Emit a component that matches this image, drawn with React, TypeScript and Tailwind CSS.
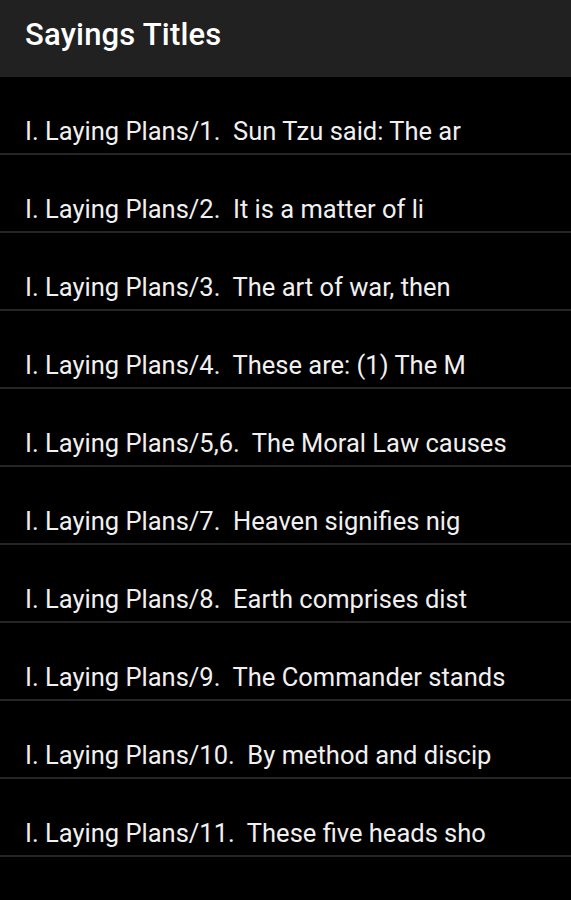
const titles = [
  'I. Laying Plans/1.  Sun Tzu said: The ar',
  'I. Laying Plans/2.  It is a matter of li',
  'I. Laying Plans/3.  The art of war, then',
  'I. Laying Plans/4.  These are: (1) The M',
  'I. Laying Plans/5,6.  The Moral Law causes',
  'I. Laying Plans/7.  Heaven signifies nig',
  'I. Laying Plans/8.  Earth comprises dist',
  'I. Laying Plans/9.  The Commander stands',
  'I. Laying Plans/10.  By method and discip',
  'I. Laying Plans/11.  These five heads sho',
  'I. Laying Plans/12.  Therefore, in your d',
];

export default function App() {
  return (
    <div className="h-[900px] overflow-hidden bg-black text-white font-['Roboto',sans-serif]">
      <header className="h-[77px] bg-[#212121] px-[25px] pt-[15px]">
        <h1 className="text-[31px] leading-[40px] font-medium text-white tracking-[0.2px]">Sayings Titles</h1>
      </header>

      <ul>
        {titles.map((t) => (
          <li key={t} className="h-[78px] border-b-2 border-[#262626] px-[25px] pt-[40px]">
            <span className="block text-[25.5px] leading-[28px] text-[#f0f0f0] whitespace-pre">{t}</span>
          </li>
        ))}
      </ul>
    </div>
  );
}
